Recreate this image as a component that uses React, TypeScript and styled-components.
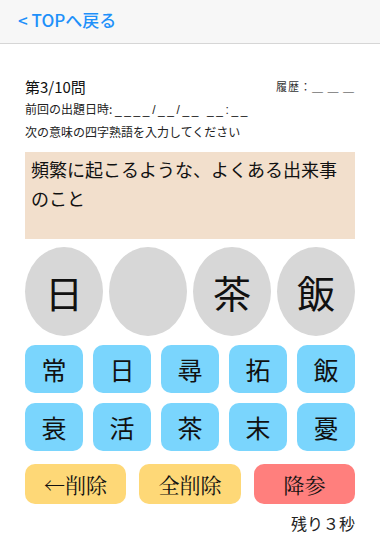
import { FC } from 'react';
import styled, { createGlobalStyle } from 'styled-components';

const GlobalStyle = createGlobalStyle`
    html, body {
        margin: 0;
        padding: 0;
        background: #FFF;
        font-family: "Noto Sans CJK JP", "Noto Sans", sans-serif;
        color: #111;
    }
    * { box-sizing: border-box; }
`

const candidates = ['常', '日', '尋', '拓', '飯', '衰', '活', '茶', '末', '憂']
const answer = ['日', '', '茶', '飯']

const App: FC = () => {
    return (
        <>
            <GlobalStyle />
            <Header>
                <BackLink>&lt; TOPへ戻る</BackLink>
            </Header>
            <Main>
                <TopRow>
                    <Counter>第3/10問</Counter>
                    <History>履歴：＿ ＿ ＿</History>
                </TopRow>
                <Info>前回の出題日時: <Blanks>____/__/__ __:__</Blanks></Info>
                <Info>次の意味の四字熟語を入力してください</Info>
                <Meaning>頻繁に起こるような、よくある出来事のこと</Meaning>
                <Slots>
                    {answer.map((c, i) => (
                        <Slot key={i}>{c}</Slot>
                    ))}
                </Slots>
                <Keys>
                    {candidates.map((c, i) => (
                        <Key key={i}>{c}</Key>
                    ))}
                </Keys>
                <Actions>
                    <ActionButton color="#FED877">←削除</ActionButton>
                    <ActionButton color="#FED877">全削除</ActionButton>
                    <ActionButton color="#FF7F7D">降参</ActionButton>
                </Actions>
                <Timer>残り３秒</Timer>
            </Main>
        </>
    )
}

export default App

const Header = styled.header`
    height: 44px;
    background-color: #F7F7F7;
    border-bottom: 1px solid #D6D6D6;
    display: flex;
    align-items: center;
    padding: 0 18px;
`

const BackLink = styled.a`
    color: #1E90FA;
    font-size: 17px;
    font-weight: 500;
    margin-top: -4px;
`

const Main = styled.main`
    padding: 31px 25px 0;
`

const TopRow = styled.div`
    display: flex;
    justify-content: space-between;
    align-items: center;
    height: 22px;
`

const Counter = styled.span`
    font-size: 15px;
`

const History = styled.span`
    font-size: 11px;
    color: #333;
    letter-spacing: 1px;
`

const Info = styled.p`
    margin: 0;
    font-size: 12px;
    line-height: 23px;
    height: 23px;
    color: #222;
`

const Blanks = styled.span`
    font-family: "Liberation Sans", sans-serif;
    letter-spacing: 2.6px;
`

const Meaning = styled.div`
    margin-top: 9px;
    height: 87px;
    background-color: #F2DFCC;
    padding: 3px 6px;
    font-size: 18px;
    line-height: 29px;
`

const Slots = styled.div`
    margin-top: 8px;
    display: grid;
    grid-template-columns: repeat(4, 1fr);
    gap: 6px;
`

const Slot = styled.div`
    height: 89px;
    border-radius: 50%;
    background-color: #D7D7D7;
    display: flex;
    align-items: center;
    justify-content: center;
    font-size: 38px;
`

const Keys = styled.div`
    margin-top: 9px;
    display: grid;
    grid-template-columns: repeat(5, 1fr);
    gap: 10px;
`

const Key = styled.button`
    height: 48px;
    border: none;
    border-radius: 10px;
    background-color: #7AD5FD;
    font-family: "Noto Sans CJK JP", sans-serif;
    font-size: 25px;
    color: #111;
    padding: 0;
    display: flex;
    align-items: center;
    justify-content: center;
`

const Actions = styled.div`
    margin-top: 13px;
    display: grid;
    grid-template-columns: 101px 102px 101px;
    justify-content: space-between;
`

const ActionButton = styled.button<{ color: string }>`
    height: 40px;
    border: none;
    border-radius: 10px;
    background-color: ${props => props.color};
    font-family: "Noto Serif CJK JP", "Liberation Serif", serif;
    font-size: 21px;
    color: #111;
    padding: 0;
`

const Timer = styled.div`
    margin-top: 7px;
    text-align: right;
    font-size: 16px;
    color: #222;
`
